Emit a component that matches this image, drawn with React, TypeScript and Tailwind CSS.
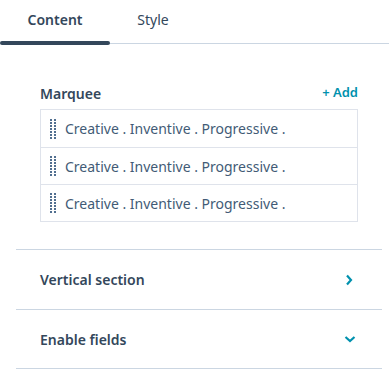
import React from 'react';

const items = [
  'Creative . Inventive . Progressive .',
  'Creative . Inventive . Progressive .',
  'Creative . Inventive . Progressive .',
];

const DragHandle = () => (
  <div className="grid grid-cols-2 gap-x-[2px] gap-y-[1px] w-[5px] mr-[10px]">
    {Array.from({ length: 14 }).map((_, i) => (
      <span key={i} className="block w-[2px] h-[2px] bg-[#516f90]" />
    ))}
  </div>
);

const App = () => {
  return (
    <div
      className="w-[389px] h-[370px] bg-white text-[#33475b] overflow-hidden"
      style={{ fontFamily: '"Noto Sans", sans-serif' }}
    >
      {/* tabs */}
      <div className="relative flex h-[44px] border-b border-[#cbd6e2]">
        <div className="relative w-[110px] flex justify-center pt-[9px] text-[14px] font-semibold">
          Content
          <span className="absolute left-0 bottom-[-2px] w-[110px] h-[4px] rounded-full bg-[#33475b]" />
        </div>
        <div className="w-[86px] flex justify-center pt-[9px] text-[14px] text-[#33475b]">Style</div>
      </div>

      {/* marquee */}
      <div className="px-[40px] pt-[40px] pr-[31px]">
        <div className="flex items-center justify-between h-[18px] mb-[7px]">
          <span className="text-[14px] font-semibold">Marquee</span>
          <span className="text-[13px] font-semibold text-[#0091ae]">+ Add</span>
        </div>
        <div className="border border-[#dfe3eb]">
          {items.map((text, i) => (
            <div
              key={i}
              className={`flex items-center h-[37px] pl-[9px] ${i > 0 ? 'border-t border-[#dfe3eb]' : ''}`}
            >
              <DragHandle />
              <span className="text-[14px] text-[#425b76]">{text}</span>
            </div>
          ))}
        </div>
      </div>

      {/* sections */}
      <div className="mx-[16px] mt-[27px] mr-[7px]">
        <div className="flex items-center justify-between h-[60px] border-t border-[#cbd6e2] pl-[24px] pr-[29px]">
          <span className="text-[14px] font-semibold">Vertical section</span>
          <svg width="8" height="12" viewBox="0 0 8 12" fill="none">
            <path d="M2 1.5 L6 6 L2 10.5" stroke="#0091ae" strokeWidth="2.2" />
          </svg>
        </div>
        <div className="flex items-center justify-between h-[60px] border-t border-b border-[#cbd6e2] pl-[24px] pr-[26px]">
          <span className="text-[14px] font-semibold">Enable fields</span>
          <svg width="12" height="8" viewBox="0 0 12 8" fill="none">
            <path d="M1.5 2 L6 6 L10.5 2" stroke="#0091ae" strokeWidth="2.2" />
          </svg>
        </div>
      </div>
    </div>
  );
};

export default App;
